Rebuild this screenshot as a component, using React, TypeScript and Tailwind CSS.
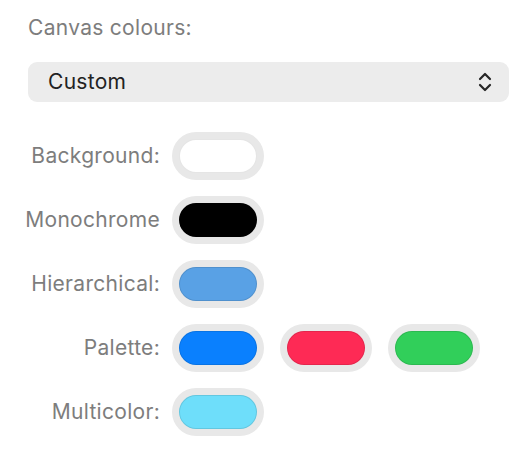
const rows: { label: string; colors: string[] }[] = [
  { label: "Background:", colors: ["bg-white"] },
  { label: "Monochrome", colors: ["bg-black"] },
  { label: "Hierarchical:", colors: ["bg-[#59a1e5]"] },
  { label: "Palette:", colors: ["bg-[#0a80fe]", "bg-[#fe2a55]", "bg-[#31cf5a]"] },
  { label: "Multicolor:", colors: ["bg-[#6edefa]"] },
]

function Swatch({ color }: { color: string }) {
  return (
    <div className="flex h-[48px] w-[92px] items-center justify-center rounded-full bg-[#e8e8e8]">
      <div className={`h-[34px] w-[78px] rounded-full border border-black/10 ${color}`} />
    </div>
  )
}

export default function App() {
  return (
    <div
      className="h-[468px] w-[526px] bg-white"
      style={{ fontFamily: "Inter, 'Liberation Sans', sans-serif" }}
    >
      <div className="px-[28px] pt-[15px]">
        <div className="text-[21px] leading-[26px] tracking-[0.3px] text-[#7d7d7d]">Canvas colours:</div>
        <div className="mt-[21px] flex h-[40px] w-[481px] items-center justify-between rounded-[9px] bg-[#ececec] pl-[20px] pr-[16px]">
          <span className="text-[21px] tracking-[0.3px] text-[#222]">Custom</span>
          <svg width="16" height="22" viewBox="0 0 16 22" fill="none" stroke="#262626" strokeWidth="2.2" strokeLinecap="round" strokeLinejoin="round">
            <path d="M3 8l5-5 5 5" />
            <path d="M3 14l5 5 5-5" />
          </svg>
        </div>
      </div>

      <div className="mt-[30px] flex flex-col gap-[16px]">
        {rows.map((row) => (
          <div key={row.label} className="flex items-center gap-[12px]">
            <div className="w-[160px] text-right text-[21px] tracking-[0.3px] text-[#7d7d7d]">{row.label}</div>
            <div className="flex gap-[16px]">
              {row.colors.map((c) => (
                <Swatch key={c} color={c} />
              ))}
            </div>
          </div>
        ))}
      </div>
    </div>
  )
}
